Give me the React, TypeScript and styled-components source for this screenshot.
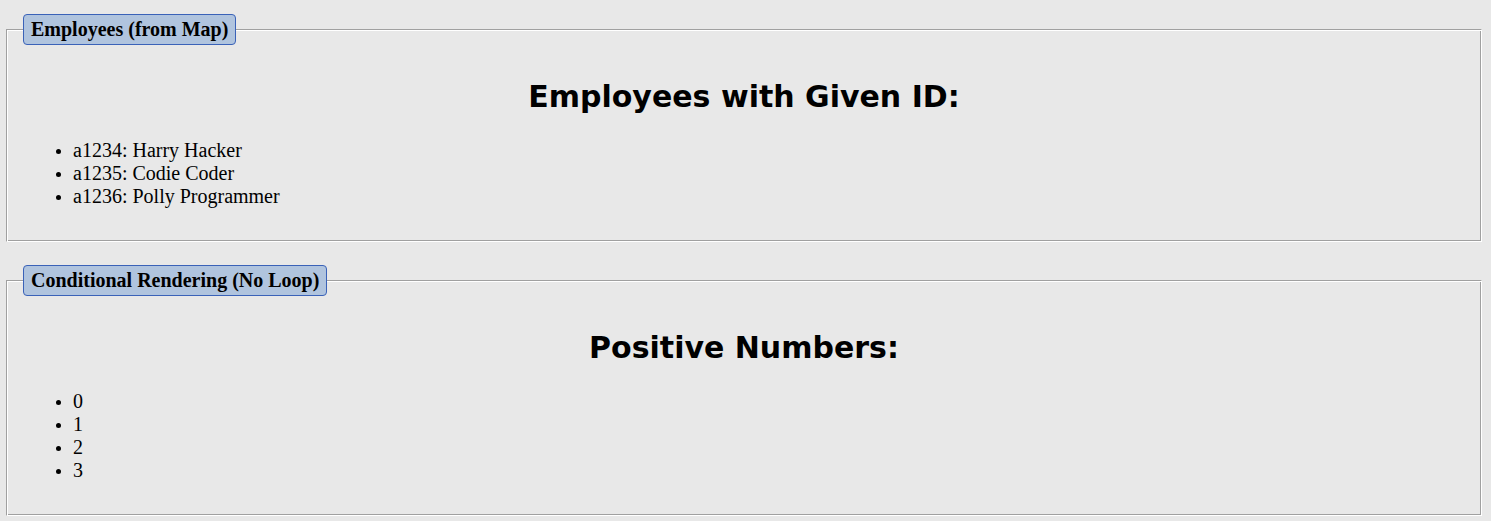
import React from "react";
import styled, { createGlobalStyle } from "styled-components";

const GlobalStyle = createGlobalStyle`
  html, body {
    margin: 0;
    padding: 0;
    background: #e8e8e8;
  }
  body {
    font-family: "Liberation Serif", "Times New Roman", serif;
    color: #000;
  }
`;

const Page = styled.div`
  display: flex;
  flex-direction: column;
  gap: 23px;
  padding: 14px 9px 0 6px;
`;

// groove border drawn by hand: gray outer top/left + white inner, mirrored on bottom/right
const Panel = styled.fieldset`
  margin: 0;
  padding: 1px 16px 33px 16px;
  border: 1px solid;
  border-color: #a0a0a0 #ffffff #ffffff #a0a0a0;
  box-shadow: inset 1px 1px 0 #ffffff, inset -1px -1px 0 #a0a0a0;
  min-width: 0;
`;

const Legend = styled.legend`
  padding: 3px 7px 3px 7px;
  background: #b0c4de;
  border: 1px solid #3a62b8;
  border-radius: 4px;
  font-size: 20px;
  font-weight: bold;
`;

const Heading = styled.h2`
  margin: 33px 0 25px;
  text-align: center;
  font-family: Verdana, "DejaVu Sans", sans-serif;
  font-size: 30px;
  font-weight: bold;
`;

const List = styled.ul`
  margin: 0;
  padding-left: 50px;
  font-size: 20px;
  line-height: 23px;

  li::marker {
    font-size: 17px;
  }
`;

const employees = new Map<string, string>([
  ["a1234", "Harry Hacker"],
  ["a1235", "Codie Coder"],
  ["a1236", "Polly Programmer"],
]);

const numbers = [-3, -2, -1, 0, 1, 2, 3];

export default function App() {
  return (
    <>
      <GlobalStyle />
      <Page>
        <Panel>
          <Legend>Employees (from Map)</Legend>
          <Heading>Employees with Given ID:</Heading>
          <List>
            {Array.from(employees.entries()).map(([id, name]) => (
              <li key={id}>
                {id}: {name}
              </li>
            ))}
          </List>
        </Panel>
        <Panel>
          <Legend>Conditional Rendering (No Loop)</Legend>
          <Heading>Positive Numbers:</Heading>
          <List>
            {numbers.map((n) => (n >= 0 ? <li key={n}>{n}</li> : null))}
          </List>
        </Panel>
      </Page>
    </>
  );
}
